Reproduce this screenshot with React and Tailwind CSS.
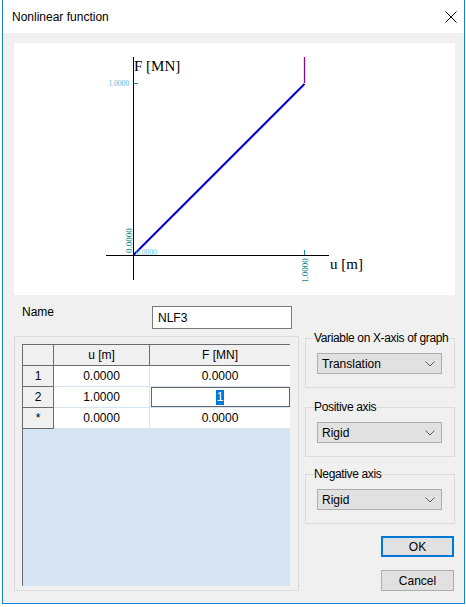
import React from 'react';

const font = { fontFamily: '"Liberation Sans", Arial, sans-serif' };

function Chevron() {
    return (
        <svg width="10" height="6" viewBox="0 0 10 6" className="shrink-0">
            <path d="M0.5 0.5 L5 5 L9.5 0.5" fill="none" stroke="#5a5a5a" strokeWidth="1" />
        </svg>
    );
}

function Combo({ value }) {
    return (
        <div className="ml-[11px] mt-[8px] w-[125px] h-[21px] bg-[#e1e1e1] border border-[#adadad] flex items-center justify-between pl-[4px] pr-[6px] text-[12px] text-black">
            <span>{value}</span>
            <Chevron />
        </div>
    );
}

function Group({ title, value, className = '' }) {
    return (
        <fieldset className={`border border-[#dcdcdc] h-[57px] ${className}`}>
            <legend className="ml-[8px] leading-[14px] text-[12px] text-black whitespace-nowrap tracking-[-0.35px]">{title}</legend>
            <Combo value={value} />
        </fieldset>
    );
}

function Graph() {
    return (
        <svg width="441" height="252" className="block">
            {/* axes */}
            <line x1="119.5" y1="14" x2="119.5" y2="237" stroke="#000" strokeWidth="1" />
            <line x1="92" y1="212.5" x2="315" y2="212.5" stroke="#000" strokeWidth="1" />
            {/* ticks */}
            <line x1="119.5" y1="40.5" x2="124" y2="40.5" stroke="#0f8f96" strokeWidth="1" />
            <line x1="290.5" y1="207" x2="290.5" y2="212" stroke="#0f8f96" strokeWidth="1" />
            {/* curve */}
            <line x1="290.5" y1="14" x2="290.5" y2="40" stroke="#8b0a8b" strokeWidth="1.3" />
            <line x1="119.5" y1="212" x2="290.5" y2="41" stroke="#0000cc" strokeWidth="2" />
            {/* labels */}
            <text x="120" y="28" fontFamily="'Liberation Serif', serif" fontSize="15" fill="#000">F [MN]</text>
            <text x="316" y="226" fontFamily="'Liberation Serif', serif" fontSize="15" fill="#000">u [m]</text>
            <text x="115" y="43" textAnchor="end" fontFamily="'Liberation Serif', serif" fontSize="7.5" fill="#4fbadb">1.0000</text>
            <text x="122" y="212" fontFamily="'Liberation Serif', serif" fontSize="7.5" fill="#5cc3e0">0.0000</text>
            <text transform="translate(118 210) rotate(-90)" fontFamily="'Liberation Serif', serif" fontSize="9" fill="#078c96">0.0000</text>
            <text transform="translate(294 240) rotate(-90)" fontFamily="'Liberation Serif', serif" fontSize="9" fill="#078c96">1.0000</text>
        </svg>
    );
}

const rows = [
    { h: '1', u: '0.0000', f: '0.0000' },
    { h: '2', u: '1.0000', f: '1', editing: true },
    { h: '*', u: '0.0000', f: '0.0000' },
];

function Grid() {
    return (
        <div className="w-[268px] h-[242px] bg-[#d5e3f3] border-l border-t border-[#6b6b6b] text-[12px] text-black">
            <div className="flex h-[21px]">
                <div className="w-[31px] bg-[#f0f0f0] border-r border-b border-[#6b6b6b]" />
                <div className="w-[96px] bg-[#f0f0f0] border-r border-b border-[#6b6b6b] flex items-center justify-center">u [m]</div>
                <div className="w-[140px] bg-[#f0f0f0] border-b border-[#6b6b6b] flex items-center justify-center">F [MN]</div>
            </div>
            {rows.map((r) => (
                <div key={r.h} className="flex h-[21px]">
                    <div className="w-[31px] bg-[#f0f0f0] border-r border-b border-[#6b6b6b] flex items-center justify-center">{r.h}</div>
                    <div className="w-[96px] bg-white border-r border-b border-[#d6e4f5] flex items-center justify-center">{r.u}</div>
                    <div className="w-[140px] bg-white border-b border-[#d6e4f5] flex items-center justify-center">
                        {r.editing ? (
                            <div className="w-[139px] h-[20px] border border-[#646464] flex items-center justify-center">
                                <span className="bg-[#0078d7] text-white px-[1px] leading-[15px]">{r.f}</span>
                            </div>
                        ) : (
                            r.f
                        )}
                    </div>
                </div>
            ))}
        </div>
    );
}

export default function App() {
    return (
        <div className="w-[466px] h-[607px] bg-white overflow-hidden" style={font}>
            <div className="ml-[2px] w-[463px] h-[604px] border-x border-b border-[#1883d7] flex flex-col">
                <div className="h-[33px] shrink-0 bg-white flex items-center justify-between pl-[9px] pr-[7px]">
                    <span className="text-[12px] text-black">Nonlinear function</span>
                    <svg width="12" height="12" viewBox="0 0 12 12">
                        <path d="M0.5 0.5 L11.5 11.5 M11.5 0.5 L0.5 11.5" stroke="#000" strokeWidth="1" />
                    </svg>
                </div>
                <div className="flex-1 bg-[#f0f0f0]">
                    <div className="ml-[11px] mt-[10px] w-[441px] h-[252px] bg-white">
                        <Graph />
                    </div>
                    <div className="flex pl-[11px]">
                        <div className="w-[285px]">
                            <div className="mt-[11px] flex h-[23px]">
                                <div className="w-[138px] pl-[8px] text-[12px] leading-[12px] text-black">Name</div>
                                <div className="w-[140px] h-[23px] border border-[#7a7a7a] bg-white pl-[5px] flex items-center text-[12px] text-black">NLF3</div>
                            </div>
                            <div className="mt-[7px] h-[255px] border border-[#dcdcdc] pt-[7px] pl-[7px]">
                                <Grid />
                            </div>
                        </div>
                        <div className="w-[150px] ml-[6px] mt-[36px] flex flex-col">
                            <Group title="Variable on X-axis of graph" value="Translation" />
                            <Group title="Positive axis" value="Rigid" className="mt-[12px]" />
                            <Group title="Negative axis" value="Rigid" className="mt-[10px]" />
                            <button className="self-end mr-[1px] mt-[12px] w-[73px] h-[21px] bg-[#e1e1e1] border-2 border-[#0078d7] text-[12px] text-black">OK</button>
                            <button className="self-end mr-[1px] mt-[13px] w-[73px] h-[21px] bg-[#e1e1e1] border border-[#adadad] text-[12px] text-black">Cancel</button>
                        </div>
                    </div>
                </div>
            </div>
        </div>
    );
}
